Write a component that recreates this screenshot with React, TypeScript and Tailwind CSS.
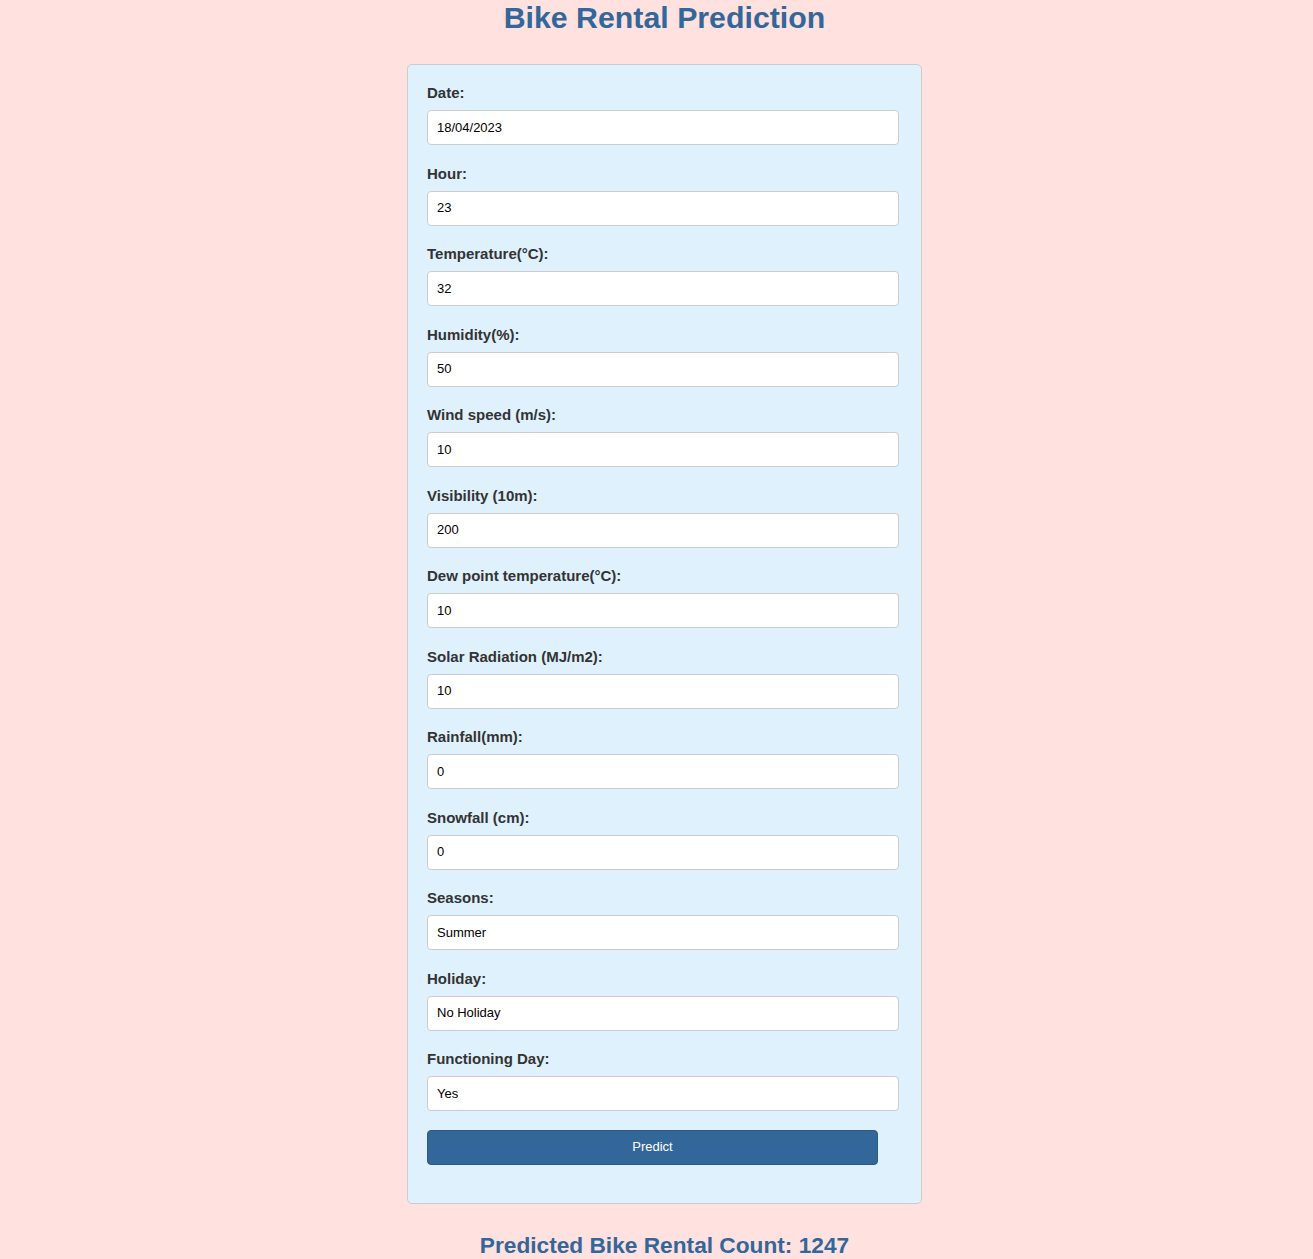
import React from "react";

const fields: [string, string][] = [
  ["Date:", "18/04/2023"],
  ["Hour:", "23"],
  ["Temperature(°C):", "32"],
  ["Humidity(%):", "50"],
  ["Wind speed (m/s):", "10"],
  ["Visibility (10m):", "200"],
  ["Dew point temperature(°C):", "10"],
  ["Solar Radiation (MJ/m2):", "10"],
  ["Rainfall(mm):", "0"],
  ["Snowfall (cm):", "0"],
  ["Seasons:", "Summer"],
  ["Holiday:", "No Holiday"],
  ["Functioning Day:", "Yes"],
];

export default function App() {
  return (
    <div
      className="min-h-[1259px] w-full bg-[#ffe1df] pl-[16px] flex flex-col items-center"
      style={{ fontFamily: '"Liberation Sans", Arial, sans-serif' }}
    >
      <h1 className="m-0 text-[30.3px] leading-[35px] font-bold text-[#336699]">
        Bike Rental Prediction
      </h1>
      <div className="mt-[29px] w-[515px] bg-[#dff1fd] border border-[#cccccc] rounded-[5px] pt-[19px] pl-[19px] pr-[22px] pb-[38px]">
        {fields.map(([label, value], i) => (
          <div key={i} className="mb-[19.5px]">
            <div className="text-[15px] leading-[18px] font-bold text-[#333333]">{label}</div>
            <div className="mt-[8px] h-[35px] bg-white border border-[#cccccc] rounded-[4px] flex items-center pl-[9px] text-[13px] text-black">
              {value}
            </div>
          </div>
        ))}
        <div className="-mt-[1px] h-[35px] w-[451px] bg-[#336699] border border-[#2c5a88] rounded-[4px] flex items-center justify-center text-[13px] text-white">
          Predict
        </div>
      </div>
      <div className="mt-[28px] text-[22.7px] leading-[26px] font-bold text-[#336699]">
        Predicted Bike Rental Count: 1247
      </div>
    </div>
  );
}
